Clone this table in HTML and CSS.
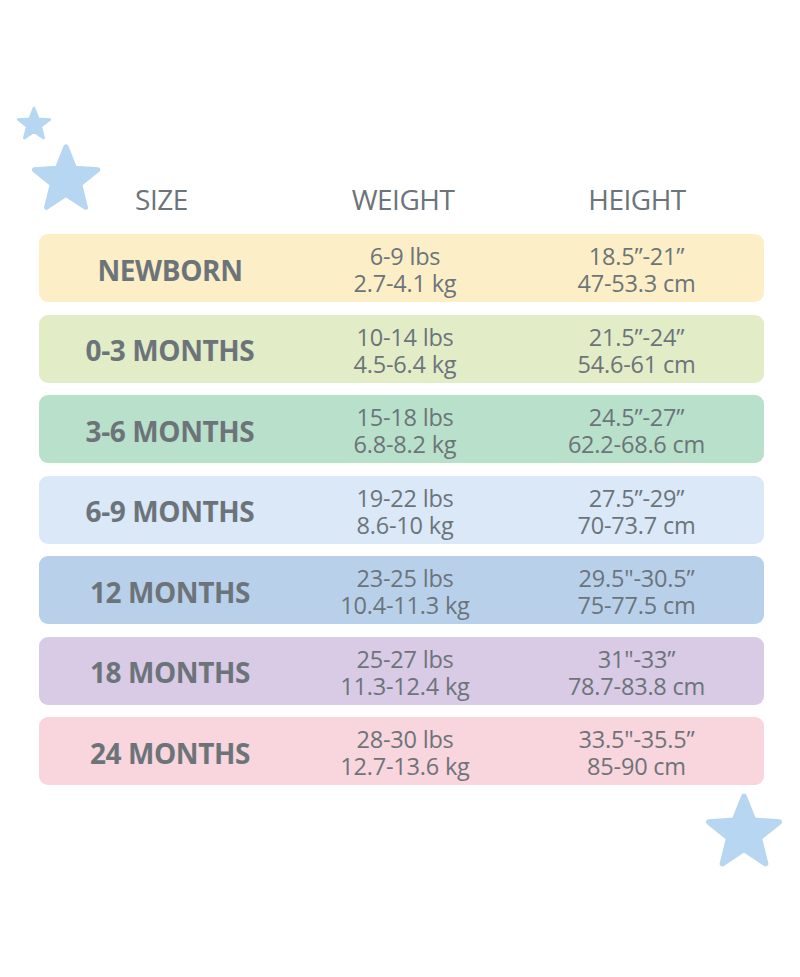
FILE: index.html
```html
<!DOCTYPE html>
<html>
<head>
<meta charset="utf-8">
<link rel="stylesheet" href="styles.css">
</head>
<body>
<div class="page">
  <svg class="star star-sm" viewBox="0 0 100 100"><polygon points="50,8 62,38 94,40 69,60 77,92 50,74 23,92 31,60 6,40 38,38"/></svg>
  <svg class="star star-lg" viewBox="0 0 100 100"><polygon points="50,8 62,38 94,40 69,60 77,92 50,74 23,92 31,60 6,40 38,38"/></svg>
  <svg class="star star-br" viewBox="0 0 100 100"><polygon points="50,8 62,38 94,40 69,60 77,92 50,74 23,92 31,60 6,40 38,38"/></svg>

  <div class="header">
    <div class="h-size">SIZE</div>
    <div class="h-weight">WEIGHT</div>
    <div class="h-height">HEIGHT</div>
  </div>

  <div class="rows">
    <div class="row c-newborn">
      <div class="size">NEWBORN</div>
      <div class="val">6-9 lbs<br>2.7-4.1 kg</div>
      <div class="val">18.5”-21”<br>47-53.3 cm</div>
    </div>
    <div class="row c-03">
      <div class="size">0-3 MONTHS</div>
      <div class="val">10-14 lbs<br>4.5-6.4 kg</div>
      <div class="val">21.5”-24”<br>54.6-61 cm</div>
    </div>
    <div class="row c-36">
      <div class="size">3-6 MONTHS</div>
      <div class="val">15-18 lbs<br>6.8-8.2 kg</div>
      <div class="val">24.5”-27”<br>62.2-68.6 cm</div>
    </div>
    <div class="row c-69">
      <div class="size">6-9 MONTHS</div>
      <div class="val">19-22 lbs<br>8.6-10 kg</div>
      <div class="val">27.5”-29”<br>70-73.7 cm</div>
    </div>
    <div class="row c-12">
      <div class="size">12 MONTHS</div>
      <div class="val">23-25 lbs<br>10.4-11.3 kg</div>
      <div class="val">29.5"-30.5”<br>75-77.5 cm</div>
    </div>
    <div class="row c-18">
      <div class="size">18 MONTHS</div>
      <div class="val">25-27 lbs<br>11.3-12.4 kg</div>
      <div class="val">31"-33”<br>78.7-83.8 cm</div>
    </div>
    <div class="row c-24">
      <div class="size">24 MONTHS</div>
      <div class="val">28-30 lbs<br>12.7-13.6 kg</div>
      <div class="val">33.5"-35.5”<br>85-90 cm</div>
    </div>
  </div>
</div>
</body>
</html>
```

FILE: styles.css
```css
* { box-sizing: border-box; }
html, body {
  margin: 0;
  padding: 0;
  background: #ffffff;
}
body {
  font-family: "Open Sans", "Liberation Sans", sans-serif;
  color: #6c747a;
}
.page {
  position: relative;
  width: 800px;
  height: 977px;
  padding: 181px 36px 0 39px;
}
.star {
  position: absolute;
  fill: #b6d6f1;
  stroke: #b6d6f1;
  stroke-width: 7;
  stroke-linejoin: round;
}
.star-sm { left: 16px; top: 105px; width: 36px; height: 36px; }
.star-lg { left: 30px; top: 141px; width: 72px; height: 72px; }
.star-br { left: 704px; top: 790px; width: 80px; height: 80px; }

.header {
  display: grid;
  grid-template-columns: 245px 238px 1fr;
  font-size: 28px;
  line-height: 36px;
  text-align: center;
  margin-bottom: 17px;
  letter-spacing: -0.5px;
}
.h-height { padding-right: 12px; }

.rows {
  display: flex;
  flex-direction: column;
  gap: 12.5px;
}
.row {
  display: grid;
  grid-template-columns: 262px 208px 1fr;
  align-items: center;
  height: 68px;
  border-radius: 9px;
  text-align: center;
}
.size {
  font-weight: 700;
  font-size: 28px;
  letter-spacing: -0.4px;
  padding-top: 3px;
}
.val {
  font-size: 23.5px;
  line-height: 27px;
  letter-spacing: -0.2px;
  padding-top: 4px;
}

.c-newborn { background: #fcefc7; }
.c-03 { background: #e2ecc7; }
.c-36 { background: #b9e0cb; }
.c-69 { background: #dae8f8; }
.c-12 { background: #b9d0ea; }
.c-18 { background: #d9cae5; }
.c-24 { background: #f9d5dd; }
```
